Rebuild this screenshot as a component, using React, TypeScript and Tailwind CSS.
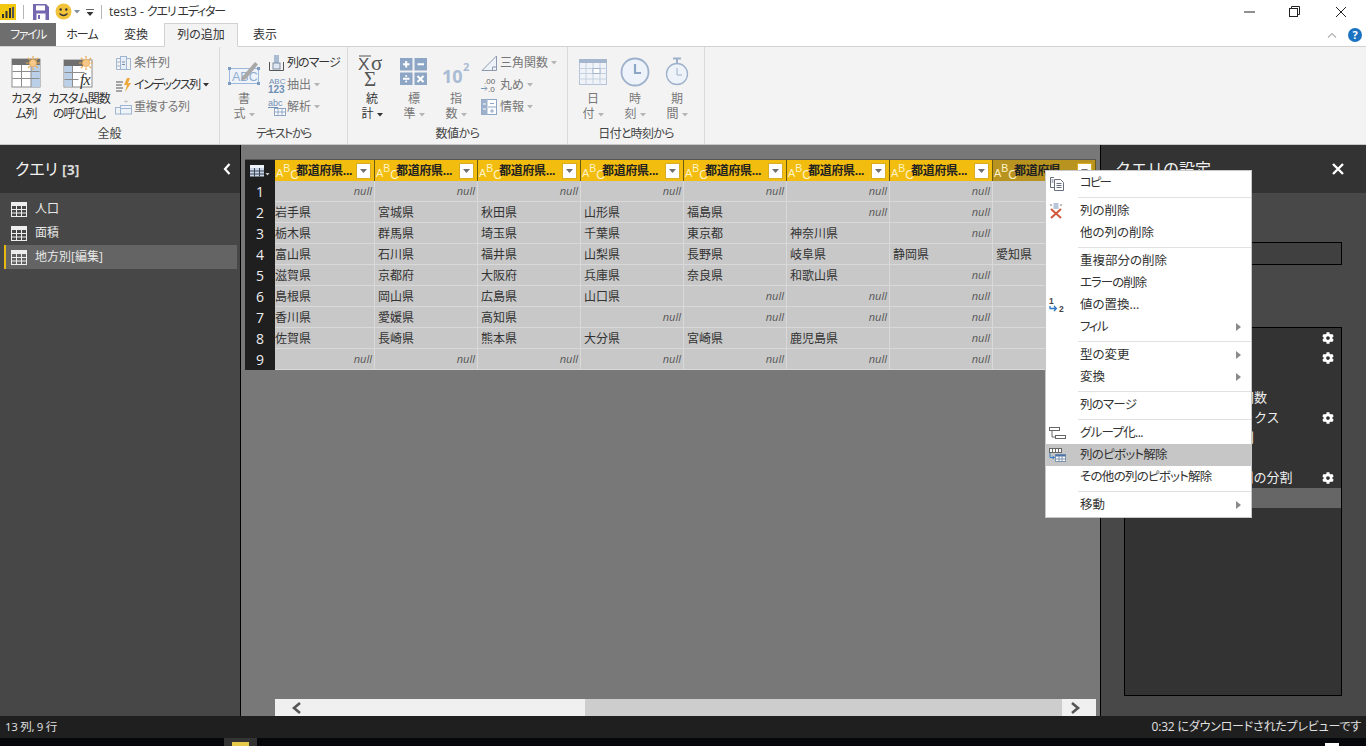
import React from 'react';
import { FaCog } from 'react-icons/fa';

const COLUMNS = 8;
const ROWS: string[][] = [
  ['', '', '', '', '', '', '', ''],
  ['岩手県', '宮城県', '秋田県', '山形県', '福島県', '', '', ''],
  ['栃木県', '群馬県', '埼玉県', '千葉県', '東京都', '神奈川県', '', ''],
  ['富山県', '石川県', '福井県', '山梨県', '長野県', '岐阜県', '静岡県', '愛知県'],
  ['滋賀県', '京都府', '大阪府', '兵庫県', '奈良県', '和歌山県', '', ''],
  ['島根県', '岡山県', '広島県', '山口県', '', '', '', ''],
  ['香川県', '愛媛県', '高知県', '', '', '', '', ''],
  ['佐賀県', '長崎県', '熊本県', '大分県', '宮崎県', '鹿児島県', '', ''],
  ['', '', '', '', '', '', '', ''],
];

const STEPS = [
  { name: 'ソース', gear: true },
  { name: 'ナビゲーション', gear: true },
  { name: '変更された型', gear: false },
  { name: '追加したカスタム関数', gear: false },
  { name: '追加されたインデックス', gear: true },
  { name: '追加されたコピー列', gear: false },
  { name: '並べ替えられた行', gear: false },
  { name: '区切り記号による列の分割', gear: true },
  { name: '変更された型1', gear: false, selected: true },
];

function Caret({ color = '#9a9a9a' }: { color?: string }) {
  return (
    <svg width="6" height="4" viewBox="0 0 6 4" className="inline-block ml-[3px] align-middle">
      <path d="M0 0h6L3 3.5z" fill={color} />
    </svg>
  );
}

function TableIcon() {
  return (
    <svg width="16" height="15" viewBox="0 0 16 15" fill="none" stroke="#eeeeee" strokeWidth="1">
      <rect x="0.5" y="0.5" width="15" height="14" />
      <rect x="0.5" y="0.5" width="15" height="3" fill="#eeeeee" />
      <path d="M0.5 7.5h15M0.5 11h15M5.5 3.5v11M10.5 3.5v11" />
    </svg>
  );
}

function Sun({ x, y }: { x: number; y: number }) {
  return (
    <g transform={`translate(${x} ${y})`}>
      <circle r="3.6" fill="#f6c98a" stroke="#eca94f" strokeWidth="0.8" />
      <path d="M0-7v2.6M0 7V4.4M-7 0h2.6M7 0H4.4M-5-5l1.9 1.9M5 5L3.1 3.1M5-5L3.1-3.1M-5 5l1.9-1.9" stroke="#eca94f" strokeWidth="1.2" />
    </g>
  );
}

function CustomColumnIcon() {
  return (
    <svg width="32" height="34" viewBox="0 0 32 34">
      <rect x="2" y="4" width="28" height="28" fill="#fff" stroke="#8d8d8d" />
      <rect x="2" y="4" width="28" height="6" fill="#6f6f6f" />
      <rect x="21" y="10" width="9" height="22" fill="#b9d0e8" />
      <path d="M2.5 16.5h27M2.5 23.5h27M11.5 10v22M21 10v22" stroke="#8d8d8d" />
      <Sun x={23} y={8} />
    </svg>
  );
}

function InvokeFunctionIcon() {
  return (
    <svg width="34" height="34" viewBox="0 0 34 34">
      <rect x="2" y="5" width="28" height="27" fill="#fff" stroke="#8d8d8d" />
      <rect x="2" y="5" width="20" height="6" fill="#6f6f6f" />
      <rect x="2.5" y="11" width="8" height="20.5" fill="#b9d0e8" />
      <path d="M2.5 17.5h20M2.5 24.5h14M10.5 11v21" stroke="#8d8d8d" />
      <Sun x={24} y={8} />
      <text x="18" y="30" fontFamily="Liberation Serif, serif" fontStyle="italic" fontSize="16" fill="#333">fx</text>
    </svg>
  );
}

function FormatIcon() {
  return (
    <svg width="32" height="28" viewBox="0 0 32 28">
      <rect x="1.5" y="10.5" width="29" height="15" fill="#eef3f9" stroke="#9db8d8" />
      <rect x="0" y="9" width="3" height="3" fill="#7c9cc4" />
      <rect x="29" y="9" width="3" height="3" fill="#7c9cc4" />
      <rect x="0" y="24" width="3" height="3" fill="#7c9cc4" />
      <rect x="29" y="24" width="3" height="3" fill="#7c9cc4" />
      <text x="4" y="23" fontFamily="Liberation Sans, sans-serif" fontSize="12.5" fill="#8fadd0">ABC</text>
      <path d="M14 19L27 4l3 2.5L18 21l-5 2z" fill="#a8a8a8" />
    </svg>
  );
}

function SigmaIcon() {
  return (
    <svg width="34" height="38" viewBox="0 0 34 38">
      <path d="M4 3h12" stroke="#555" />
      <text x="3" y="17" fontFamily="Liberation Sans, sans-serif" fontSize="17" fill="#555">X</text>
      <text x="16" y="17" fontFamily="Liberation Serif, serif" fontSize="21" fill="#555">σ</text>
      <text x="9" y="33" fontFamily="Liberation Serif, serif" fontSize="21" fill="#555">Σ</text>
    </svg>
  );
}

function StandardIcon() {
  return (
    <svg width="28" height="28" viewBox="0 0 28 28">
      <rect width="12.5" height="12.5" fill="#8ea6c6" />
      <rect x="14.5" width="12.5" height="12.5" fill="#8ea6c6" />
      <rect y="14.5" width="12.5" height="12.5" fill="#8ea6c6" />
      <rect x="14.5" y="14.5" width="12.5" height="12.5" fill="#8ea6c6" />
      <path d="M3 6.2h6.5M6.2 3v6.5M17.5 6.2H24M3 20.8h6.5M17.5 18l6 6M23.5 18l-6 6" stroke="#fff" strokeWidth="2" />
      <circle cx="6.2" cy="18" r="1" fill="#fff" />
      <circle cx="6.2" cy="23.6" r="1" fill="#fff" />
    </svg>
  );
}

function PowerIcon() {
  return (
    <svg width="32" height="30" viewBox="0 0 32 30">
      <text x="2" y="26" fontFamily="Open Sans, sans-serif" fontWeight="700" fontSize="18" fill="#a9bcd4">10</text>
      <text x="23" y="14" fontFamily="Open Sans, sans-serif" fontWeight="700" fontSize="11" fill="#a9bcd4">2</text>
    </svg>
  );
}

function CalendarIcon() {
  return (
    <svg width="28" height="26" viewBox="0 0 28 26">
      <rect x="0.5" y="0.5" width="27" height="25" fill="#f0f4f9" stroke="#b4c3d7" />
      <rect width="28" height="4" fill="#a3b6ce" />
      <path d="M0 9.5h28M0 14.5h28M0 20h28M7 4v22M14 4v22M21 4v22" stroke="#c3d0e0" />
      <rect x="14" y="9.5" width="7" height="5" fill="#fff" stroke="#a3b6ce" />
    </svg>
  );
}

function ClockIcon() {
  return (
    <svg width="30" height="30" viewBox="0 0 30 30" fill="none">
      <circle cx="15" cy="15" r="13.5" fill="#eef3f9" stroke="#9db1cc" strokeWidth="1.8" />
      <path d="M15 7v9h6" stroke="#8ea6c6" strokeWidth="2.2" />
    </svg>
  );
}

function StopwatchIcon() {
  return (
    <svg width="24" height="30" viewBox="0 0 24 30" fill="none">
      <path d="M8 1.5h8M12 2v4" stroke="#9db1cc" strokeWidth="2" />
      <circle cx="12" cy="17" r="10.5" fill="#eef3f9" stroke="#9db1cc" strokeWidth="1.3" />
      <path d="M12 11v7h5" stroke="#9db1cc" />
    </svg>
  );
}

function ConditionIcon() {
  return (
    <svg width="17" height="16" viewBox="0 0 17 16" fill="none" stroke="#9fb6d2">
      <path d="M5 3.5H1.5v11h14v-11H12M1.5 7H5M1.5 11H5" />
      <rect x="5.5" y="1.5" width="6" height="13" fill="#e6eef7" />
      <path d="M7 7h3M7 9.5h3" stroke="#7d8da3" />
    </svg>
  );
}

function IndexIcon() {
  return (
    <svg width="17" height="16" viewBox="0 0 17 16" fill="none">
      <path d="M1 5h7M1 8h6M1 11h7M1 14h6" stroke="#555" />
      <path d="M12 1l-3 7h3l-2 7 6-9h-3l2-5z" fill="#eea93a" />
    </svg>
  );
}

function DuplicateIcon() {
  return (
    <svg width="17" height="16" viewBox="0 0 17 16" fill="none" stroke="#9fb6d2">
      <rect x="0.5" y="8.5" width="5" height="6.5" />
      <rect x="5.5" y="6.5" width="11" height="8.5" fill="#eef3f9" />
      <path d="M5.5 9.5h11" />
      <path d="M11 1v3M9 2.5h4" stroke="#c8c8c8" />
    </svg>
  );
}

function MergeIcon() {
  return (
    <svg width="17" height="18" viewBox="0 0 17 18" fill="none">
      <path d="M1.5 8v8.5h14V8" stroke="#555" />
      <rect x="6" y="1" width="5" height="11" fill="#a9bcd4" />
      <rect x="5" y="9" width="7" height="6" fill="#dfe8f2" stroke="#7d8da3" />
    </svg>
  );
}

function ExtractIcon() {
  return (
    <svg width="18" height="18" viewBox="0 0 18 18">
      <text x="1" y="8" fontFamily="Liberation Sans, sans-serif" fontSize="8" fill="#6f8fb5">ABC</text>
      <text x="0" y="17" fontFamily="Liberation Sans, sans-serif" fontWeight="700" fontSize="10" fill="#6f8fb5">123</text>
    </svg>
  );
}

function ParseIcon() {
  return (
    <svg width="18" height="18" viewBox="0 0 18 18" fill="none">
      <text x="0" y="8" fontFamily="Liberation Sans, sans-serif" fontSize="9" fill="#6f8fb5">abc</text>
      <path d="M0 9.5h10" stroke="#6f8fb5" />
      <rect x="6.5" y="10.5" width="11" height="7" fill="#fff" stroke="#8ea6c6" />
      <path d="M6.5 14h11M10 10.5v7M14 10.5v7" stroke="#8ea6c6" />
    </svg>
  );
}

function TrigIcon() {
  return (
    <svg width="17" height="18" viewBox="0 0 17 18" fill="none">
      <path d="M1 16.5L15.5 2v14.5z" fill="#eef3f9" stroke="#8c9aad" />
      <path d="M11.5 16.5v-3.5h4" stroke="#8c9aad" />
    </svg>
  );
}

function RoundIcon() {
  return (
    <svg width="17" height="16" viewBox="0 0 17 16">
      <text x="3" y="7" fontFamily="Liberation Sans, sans-serif" fontSize="8" fill="#666">.00</text>
      <text x="7" y="15" fontFamily="Liberation Sans, sans-serif" fontSize="8" fill="#666">.0</text>
      <path d="M0 11.5h5.5M4 9.5l2 2-2 2" stroke="#7c93b1" fill="none" />
    </svg>
  );
}

function InfoIcon() {
  return (
    <svg width="16" height="16" viewBox="0 0 16 16" fill="none">
      <rect x="0.5" y="0.5" width="15" height="15" fill="#fff" stroke="#8ea6c6" />
      <rect x="0.5" y="0.5" width="6" height="15" fill="#9db1cc" />
      <path d="M7 8h8.5M11 10v4M9 12h4M9 4.5h4" stroke="#8ea6c6" />
      <path d="M2 5h3M2 10h3" stroke="#fff" />
    </svg>
  );
}

function CopyIcon() {
  return (
    <svg width="16" height="15" viewBox="0 0 16 15" fill="none" stroke="#67707c">
      <path d="M5 1.5H1.5v10H5" />
      <path d="M5.5 3.5h6l3 3v8h-9z" fill="#fff" />
      <path d="M7.5 7.5h5M7.5 9.5h5M7.5 11.5h5M2.5 4h2M2.5 6h2" />
    </svg>
  );
}

function RemoveIcon() {
  return (
    <svg width="14" height="16" viewBox="0 0 14 16" fill="none">
      <path d="M2 3V1M12 3V1" stroke="#777" />
      <rect x="4.5" y="0" width="5" height="6" fill="#b7c6d8" />
      <path d="M2 6l10 9M12 6L2 15" stroke="#d1573c" strokeWidth="2" />
    </svg>
  );
}

function ReplaceIcon() {
  return (
    <svg width="18" height="18" viewBox="0 0 18 18">
      <text x="0" y="8" fontFamily="Liberation Sans, sans-serif" fontSize="8.5" fontWeight="700" fill="#444">1</text>
      <path d="M1 10v2.5h6M5 10l2.4 2.5L5 15" stroke="#2f78c4" strokeWidth="1.3" fill="none" />
      <text x="10" y="16" fontFamily="Liberation Sans, sans-serif" fontSize="8.5" fontWeight="700" fill="#444">2</text>
    </svg>
  );
}

function GroupIcon() {
  return (
    <svg width="17" height="12" viewBox="0 0 17 12" fill="none" stroke="#666">
      <rect x="0.5" y="0.5" width="10" height="3" />
      <rect x="6.5" y="8.5" width="10" height="3" />
      <path d="M3 4v6h3.5" />
    </svg>
  );
}

function UnpivotIcon() {
  return (
    <svg width="17" height="14" viewBox="0 0 17 14" fill="none">
      <rect x="0.5" y="0.5" width="12" height="4" fill="#fff" stroke="#666" />
      <path d="M3.5 0.5v4M6.5 0.5v4M9.5 0.5v4" stroke="#666" />
      <path d="M1 5v4.5h4M3.5 8l2 1.5-2 1.5" stroke="#2f78c4" />
      <rect x="6.5" y="6.5" width="10" height="7" fill="#fff" stroke="#7d93b0" />
      <rect x="6.5" y="6.5" width="10" height="2" fill="#4c74a8" />
      <path d="M6.5 11h10M10 8v5.5M13 8v5.5" stroke="#7d93b0" />
    </svg>
  );
}

function AbcTypeIcon() {
  return (
    <span className="flex h-[19px] w-[20px] shrink-0 items-start font-['Liberation_Sans',sans-serif] text-[#fff3c8]">
      <span className="mt-[7px] text-[11px] leading-none">A</span>
      <span className="mt-[2px] text-[10.5px] leading-none">B</span>
      <span className="mt-[8px] text-[12px] leading-none">C</span>
    </span>
  );
}

function LargeButton({ width, icon, lines, caret, muted, tracking = '' }: { width: string; icon: React.ReactNode; lines: string[]; caret?: string; muted?: boolean; tracking?: string }) {
  return (
    <div className={`${width} ${tracking} flex flex-col items-center pt-[6px] text-center text-[12px] leading-[15px] ${muted ? 'text-[#777777]' : 'text-[#333333]'}`}>
      <div className="flex h-[38px] items-center justify-center">{icon}</div>
      {lines.map((l, i) => (
        <div key={l} className="whitespace-nowrap">
          {l}
          {caret && i === lines.length - 1 ? <Caret color={caret} /> : null}
        </div>
      ))}
    </div>
  );
}

function SmallButton({ icon, label, muted, caret, tracking = '' }: { icon: React.ReactNode; label: string; muted?: boolean; caret?: string; tracking?: string }) {
  return (
    <div className={`flex h-[22px] items-center text-[12px] whitespace-nowrap ${muted ? 'text-[#777777]' : 'text-[#333333]'}`}>
      <span className="flex w-[19px] shrink-0 items-center">{icon}</span>
      <span className={tracking}>{label}</span>
      {caret ? <Caret color={caret} /> : null}
    </div>
  );
}

function RibbonGroup({ width, label, tracking = '', children }: { width: string; label: string; tracking?: string; children: React.ReactNode }) {
  return (
    <div className={`${width} flex h-full shrink-0 flex-col border-r border-[#dadada]`}>
      <div className="flex flex-1">{children}</div>
      <div className={`h-[21px] text-center text-[12px] leading-[22px] text-[#444444] ${tracking}`}>{label}</div>
    </div>
  );
}

function MenuItem({ icon, label, arrow, active, tracking = '' }: { icon?: React.ReactNode; label: string; arrow?: boolean; active?: boolean; tracking?: string }) {
  return (
    <div className={`flex h-[22px] items-center pr-[10px] text-[12.5px] text-[#333333] ${active ? 'bg-[#c6c6c6]' : ''}`}>
      <span className="flex w-[34px] shrink-0 items-center pl-[3px]">{icon}</span>
      <span className={`flex-1 whitespace-nowrap ${tracking}`}>{label}</span>
      {arrow ? (
        <svg width="5" height="8" viewBox="0 0 5 8">
          <path d="M0 0l5 4-5 4z" fill="#8a8a8a" />
        </svg>
      ) : null}
    </div>
  );
}

function MenuSeparator() {
  return (
    <div className="flex h-[6px] items-center pl-[32px]">
      <div className="h-px w-full bg-[#e1e1e1]" />
    </div>
  );
}

function ContextMenu() {
  return (
    <div className="absolute left-[1045px] top-[170px] w-[207px] border border-[#c8c8c8] bg-white py-px font-['Open_Sans','Noto_Sans_CJK_JP',sans-serif] [font-feature-settings:'palt']">
      <MenuItem icon={<CopyIcon />} label="コピー" tracking="tracking-[-2px]" />
      <MenuSeparator />
      <MenuItem icon={<RemoveIcon />} label="列の削除" />
      <MenuItem label="他の列の削除" />
      <MenuSeparator />
      <MenuItem label="重複部分の削除" />
      <MenuItem label="エラーの削除" tracking="tracking-[-1px]" />
      <MenuItem icon={<ReplaceIcon />} label="値の置換..." />
      <MenuItem label="フィル" arrow tracking="tracking-[-1.5px]" />
      <MenuSeparator />
      <MenuItem label="型の変更" arrow />
      <MenuItem label="変換" arrow />
      <MenuSeparator />
      <MenuItem label="列のマージ" tracking="tracking-[-0.8px]" />
      <MenuSeparator />
      <MenuItem icon={<GroupIcon />} label="グループ化..." tracking="tracking-[-0.7px]" />
      <MenuItem icon={<UnpivotIcon />} label="列のピボット解除" active tracking="tracking-[-0.75px]" />
      <MenuItem label="その他の列のピボット解除" tracking="tracking-[-0.75px]" />
      <MenuSeparator />
      <MenuItem label="移動" arrow />
    </div>
  );
}

function HeaderCell({ index }: { index: number }) {
  const last = index === COLUMNS - 1;
  return (
    <div className={`flex h-[21px] items-center border-r border-[#6b5a12] pl-[1px] pr-[3px] ${last ? 'bg-[#b8931f]' : 'bg-[#f2bd0e]'}`}>
      <AbcTypeIcon />
      <span className="flex-1 overflow-hidden whitespace-nowrap text-[12px] font-bold tracking-[-0.3px] text-[#222222] [font-feature-settings:'palt']">
        {last ? '都道府県' : '都道府県...'}
      </span>
      <span className="flex h-[16px] w-[15px] shrink-0 items-center justify-center border border-[#d8ad22] bg-white">
        <svg width="7" height="4" viewBox="0 0 7 4">
          <path d="M0 0h7L3.5 4z" fill="#707070" />
        </svg>
      </span>
    </div>
  );
}

function DataTable() {
  return (
    <div className="grid w-[851px] grid-cols-[30px_100px_repeat(7,103px)]">
      <div className="flex h-[21px] items-center justify-center bg-[#1f1f1f]">
        <svg width="20" height="12" viewBox="0 0 20 12" fill="none">
          <rect x="0" y="0" width="14" height="11.5" fill="#c9d5e6" />
          <rect x="0" y="0" width="14" height="3" fill="#eef3f9" />
          <path d="M0 6h14M0 9h14M4.5 3v8.5M9.5 3v8.5" stroke="#3a4656" />
          <path d="M15.5 8h4l-2 2.5z" fill="#cccccc" />
        </svg>
      </div>
      {Array.from({ length: COLUMNS }, (_, i) => (
        <HeaderCell key={i} index={i} />
      ))}
      {ROWS.map((row, r) => (
        <React.Fragment key={r}>
          <div className="flex h-[21px] items-center justify-center bg-[#1f1f1f] text-[14px] text-[#eeeeee]">{r + 1}</div>
          {row.map((cell, c) => (
            <div key={c} className={`flex h-[21px] items-center border-b border-r border-[#d9d9d9] bg-[#c8c8c8] ${c === 0 ? 'pl-0' : 'pl-[3px]'} pr-[2px]`}>
              {cell ? (
                <span className="pt-[2px] text-[12px] text-[#333333]">{cell}</span>
              ) : (
                <span className="ml-auto font-['Open_Sans',sans-serif] text-[11px] italic text-[#555555]">null</span>
              )}
            </div>
          ))}
        </React.Fragment>
      ))}
    </div>
  );
}

function ScrollBar() {
  return (
    <div className="ml-[30px] flex h-[17px] w-[821px] bg-[#f0f0f0]">
      <div className="flex w-[310px] items-center pl-[16px]">
        <svg width="11" height="12" viewBox="0 0 11 12" fill="none">
          <path d="M9 1L3 6l6 5" stroke="#555555" strokeWidth="2.6" />
        </svg>
      </div>
      <div className="w-[477px] bg-[#cdcdcd]" />
      <div className="flex flex-1 items-center pl-[8px]">
        <svg width="11" height="12" viewBox="0 0 11 12" fill="none">
          <path d="M2 1l6 5-6 5" stroke="#555555" strokeWidth="2.6" />
        </svg>
      </div>
    </div>
  );
}

export default function App() {
  return (
    <div className="relative flex h-[746px] w-[1366px] flex-col overflow-hidden bg-white font-['Open_Sans','Noto_Sans_CJK_JP',sans-serif]">
      {/* Title bar */}
      <div className="flex h-[23px] shrink-0 items-center bg-white">
        <svg width="17" height="16" viewBox="0 0 17 16">
          <rect width="16" height="16" fill="#f2c80f" />
          <path d="M2 10h2v4H2zM5.5 7h2v7h-2zM9 4h2v10H9z" fill="#333" />
          <path d="M12 3h2v11h-2z" fill="#555" />
        </svg>
        <div className="ml-[6px] h-[14px] w-px bg-[#b5b5b5]" />
        <svg width="16" height="16" viewBox="0 0 16 16" className="ml-[9px]">
          <path d="M0 0h13l3 3v13H0z" fill="#7467b0" />
          <rect x="3" y="1.5" width="9" height="5" fill="#fff" />
          <rect x="3.5" y="9.5" width="9" height="6.5" fill="#fff" />
          <rect x="5" y="11" width="2" height="4" fill="#7467b0" />
        </svg>
        <svg width="17" height="17" viewBox="0 0 17 17" className="ml-[6px]">
          <circle cx="8.5" cy="8.5" r="8" fill="#f2c23a" />
          <circle cx="5.7" cy="6.5" r="1.2" fill="#333" />
          <circle cx="11.3" cy="6.5" r="1.2" fill="#333" />
          <path d="M4.5 10.5q4 4 8 0" stroke="#333" strokeWidth="1.2" fill="none" />
        </svg>
        <svg width="6" height="4" viewBox="0 0 6 4" className="ml-[2px]">
          <path d="M0 0h6L3 3.5z" fill="#7f8ea0" />
        </svg>
        <svg width="8" height="7" viewBox="0 0 8 7" className="ml-[6px] mt-[2px]">
          <path d="M0 0h8" stroke="#333" strokeWidth="1.5" />
          <path d="M0.5 3h7L4 7z" fill="#333" />
        </svg>
        <div className="ml-[7px] h-[14px] w-px bg-[#b5b5b5]" />
        <span className="ml-[7px] whitespace-pre text-[12px] text-[#333333] [font-feature-settings:'palt']">
          test3 - <span className="tracking-[-1.2px]">クエリ エディター</span>
        </span>
        <div className="ml-auto flex items-center">
          <svg width="11" height="2" viewBox="0 0 11 2">
            <path d="M0 1h11" stroke="#222" />
          </svg>
          <svg width="11" height="11" viewBox="0 0 11 11" fill="none" stroke="#222" className="ml-[34px]">
            <rect x="0.5" y="2.5" width="8" height="8" />
            <path d="M2.5 2.5v-2h8v8h-2" />
          </svg>
          <svg width="12" height="12" viewBox="0 0 12 12" fill="none" stroke="#222" className="ml-[35px] mr-[19px]">
            <path d="M1 1l10 10M11 1L1 11" />
          </svg>
        </div>
      </div>

      {/* Tabs */}
      <div className="flex h-[24px] shrink-0 items-stretch border-b border-[#d2d2d2] bg-white text-[12px] text-[#333333] [font-feature-settings:'palt']">
        <div className="flex w-[56px] items-center justify-center bg-[#6e6e6e] tracking-[-1.5px] text-[#f4f4f4]">ファイル</div>
        <div className="flex w-[52px] items-center justify-center tracking-[-1px]">ホーム</div>
        <div className="flex w-[56px] items-center justify-center">変換</div>
        <div className="-mb-px flex w-[74px] items-center justify-center border border-[#d2d2d2] border-b-[#f3f3f3] bg-[#f3f3f3]">列の追加</div>
        <div className="flex w-[54px] items-center justify-center">表示</div>
        <div className="ml-auto flex items-center">
          <svg width="10" height="6" viewBox="0 0 10 6" fill="none">
            <path d="M1 5.5l4-4 4 4" stroke="#b0b0b0" strokeWidth="1.2" />
          </svg>
          <span className="ml-[11px] mr-[4px] flex h-[14px] w-[14px] items-center justify-center rounded-full bg-[#1b72c0] text-[11px] font-bold leading-none text-white">?</span>
        </div>
      </div>

      {/* Ribbon */}
      <div className="flex h-[98px] shrink-0 border-b border-[#c8c8c8] bg-[#f3f3f3] [font-feature-settings:'palt']">
        <RibbonGroup width="w-[220px]" label="全般">
          <div className="w-[3px]" />
          <LargeButton width="w-[46px]" icon={<CustomColumnIcon />} lines={['カスタ', 'ム列']} tracking="tracking-[-1px]" />
          <LargeButton width="w-[60px]" icon={<InvokeFunctionIcon />} lines={['カスタム関数', 'の呼び出し']} tracking="tracking-[-1px]" />
          <div className="ml-[6px] flex flex-col pt-[5px]">
            <SmallButton icon={<ConditionIcon />} label="条件列" muted />
            <SmallButton icon={<IndexIcon />} label="インデックス列" caret="#333333" tracking="tracking-[-1.3px]" />
            <SmallButton icon={<DuplicateIcon />} label="重複する列" muted tracking="tracking-[-0.4px]" />
          </div>
        </RibbonGroup>
        <RibbonGroup width="w-[128px]" label="テキストから" tracking="tracking-[-1.5px]">
          <div className="w-[4px]" />
          <LargeButton width="w-[40px]" icon={<FormatIcon />} lines={['書', '式']} caret="#b5b5b5" muted />
          <div className="ml-[4px] flex flex-col pt-[5px]">
            <SmallButton icon={<MergeIcon />} label="列のマージ" tracking="tracking-[-1px]" />
            <SmallButton icon={<ExtractIcon />} label="抽出" caret="#b5b5b5" muted />
            <SmallButton icon={<ParseIcon />} label="解析" caret="#b5b5b5" muted />
          </div>
        </RibbonGroup>
        <RibbonGroup width="w-[220px]" label="数値から" tracking="tracking-[-0.5px]">
          <div className="w-[3px]" />
          <LargeButton width="w-[42px]" icon={<SigmaIcon />} lines={['統', '計']} caret="#333333" />
          <LargeButton width="w-[42px]" icon={<StandardIcon />} lines={['標', '準']} caret="#b5b5b5" muted />
          <LargeButton width="w-[42px]" icon={<PowerIcon />} lines={['指', '数']} caret="#b5b5b5" muted />
          <div className="ml-[4px] flex flex-col pt-[5px]">
            <SmallButton icon={<TrigIcon />} label="三角関数" caret="#b5b5b5" muted />
            <SmallButton icon={<RoundIcon />} label="丸め" caret="#b5b5b5" muted />
            <SmallButton icon={<InfoIcon />} label="情報" caret="#b5b5b5" muted />
          </div>
        </RibbonGroup>
        <RibbonGroup width="w-[137px]" label="日付と時刻から" tracking="tracking-[-0.7px]">
          <div className="w-[4px]" />
          <LargeButton width="w-[42px]" icon={<CalendarIcon />} lines={['日', '付']} caret="#b5b5b5" muted />
          <LargeButton width="w-[42px]" icon={<ClockIcon />} lines={['時', '刻']} caret="#b5b5b5" muted />
          <LargeButton width="w-[42px]" icon={<StopwatchIcon />} lines={['期', '間']} caret="#b5b5b5" muted />
        </RibbonGroup>
      </div>

      {/* Main area */}
      <div className="flex h-[571px] shrink-0">
        {/* Queries */}
        <div className="flex w-[241px] shrink-0 flex-col border-r border-black bg-[#474747]">
          <div className="flex h-[48px] shrink-0 items-center justify-between bg-[#333333] pl-[15px] pr-[9px]">
            <span className="text-[16px] text-[#f2f2f2] [font-feature-settings:'palt']">
              クエリ <span className="text-[14px] font-bold text-[#d8d8d8]">[3]</span>
            </span>
            <svg width="8" height="12" viewBox="0 0 8 12" fill="none">
              <path d="M6.5 1L2 6l4.5 5" stroke="#ffffff" strokeWidth="2.2" />
            </svg>
          </div>
          <div className="flex flex-col pt-[4px] text-[12px] text-[#e8e8e8]">
            <div className="flex h-[24px] items-center gap-[8px] pl-[11px]">
              <TableIcon />
              人口
            </div>
            <div className="flex h-[24px] items-center gap-[8px] pl-[11px]">
              <TableIcon />
              面積
            </div>
            <div className="ml-[4px] mr-[3px] flex h-[24px] items-center gap-[8px] border-l-2 border-[#e8b90f] bg-[#646464] pl-[5px]">
              <TableIcon />
              地方別[編集]
            </div>
          </div>
        </div>

        {/* Table */}
        <div className="flex w-[860px] shrink-0 flex-col border-r border-black bg-[#787878] pl-[4px] pt-[14px]">
          <div className="h-px w-[851px] bg-[#555555]" />
          <DataTable />
          <div className="flex-1" />
          <ScrollBar />
        </div>

        {/* Query settings */}
        <div className="flex flex-1 flex-col bg-[#484848]">
          <div className="flex h-[48px] shrink-0 items-center justify-between bg-[#333333] pl-[14px] pr-[22px]">
            <span className="text-[16px] text-[#f2f2f2]">クエリの設定</span>
            <svg width="12" height="12" viewBox="0 0 12 12" fill="none">
              <path d="M1 1l10 10M11 1L1 11" stroke="#ffffff" strokeWidth="2.4" />
            </svg>
          </div>
          <div className="flex flex-1 flex-col pb-[20px] pl-[23px] pr-[24px] text-[13px] text-[#eeeeee]">
            <div className="mt-[7px] h-[20px]">プロパティ</div>
            <div className="mt-[2px] h-[20px]">名前</div>
            <div className="h-[23px] border border-black bg-[#404040] pl-[4px] text-[12px]">地方別</div>
            <div className="mt-[4px] h-[36px]">すべてのプロパティ</div>
            <div className="h-[22px]">適用したステップ</div>
            <div className="flex-1 border border-black bg-[#333333]">
              {STEPS.map((s) => (
                <div key={s.name} className={`flex h-[20px] items-center justify-between whitespace-nowrap pl-[12px] pr-[7px] ${s.selected ? 'bg-[#666666]' : ''}`}>
                  <span>{s.name}</span>
                  {s.gear ? <FaCog className="text-[12px] text-white" /> : null}
                </div>
              ))}
            </div>
          </div>
        </div>
      </div>

      {/* Status bar */}
      <div className="flex h-[22px] shrink-0 items-center justify-between bg-[#1f1f1f] pl-[5px] pr-[5px] text-[12px] text-[#e0e0e0] [font-feature-settings:'palt']">
        <span className="text-[11.5px] tracking-[-0.3px]">13 列, 9 行</span>
        <span className="tracking-[-0.2px]">0:32 にダウンロードされたプレビューです</span>
      </div>

      {/* Task bar sliver */}
      <div className="flex h-[8px] shrink-0 bg-[#05070a]">
        <div className="ml-[224px] flex h-full w-[33px] items-end justify-center bg-[#333333]">
          <div className="h-[4px] w-[17px] bg-[#e6c84a]" />
        </div>
        <div className="ml-[1068px] mt-[5px] h-[3px] w-[14px] bg-white" />
      </div>

      <ContextMenu />
    </div>
  );
}
